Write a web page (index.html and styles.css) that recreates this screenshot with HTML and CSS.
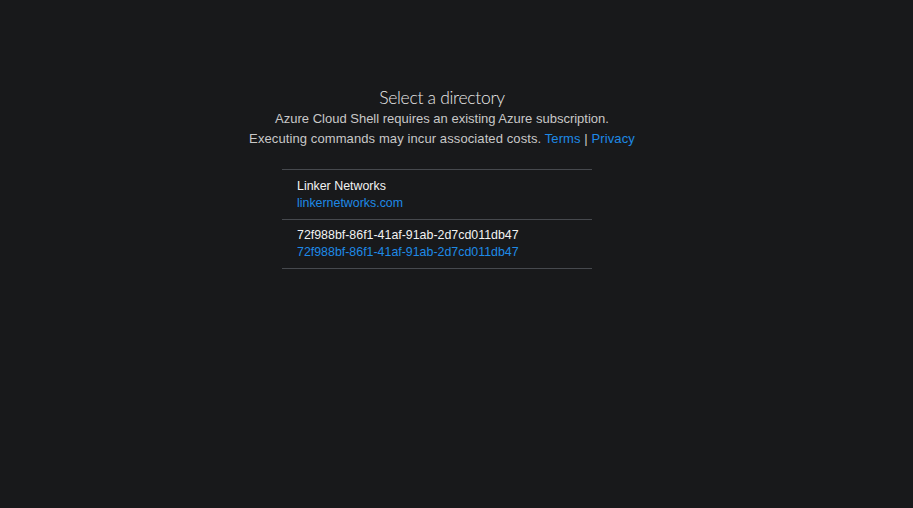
FILE: index.html
```html
<!DOCTYPE html>
<html>
<head>
<meta charset="utf-8">
<link rel="stylesheet" href="styles.css">
</head>
<body>
<main class="page">
  <h1 class="title">Select a directory</h1>
  <p class="desc">Azure Cloud Shell requires an existing Azure subscription.</p>
  <p class="desc">Executing commands may incur associated costs. <a class="link" href="#">Terms</a> | <a class="link" href="#">Privacy</a></p>
  <ul class="list">
    <li class="item">
      <div class="item-name">Linker Networks</div>
      <a class="link item-sub" href="#">linkernetworks.com</a>
    </li>
    <li class="item">
      <div class="item-name">72f988bf-86f1-41af-91ab-2d7cd011db47</div>
      <a class="link item-sub" href="#">72f988bf-86f1-41af-91ab-2d7cd011db47</a>
    </li>
  </ul>
</main>
</body>
</html>
```
FILE: styles.css
```css
html, body {
  margin: 0;
  height: 100%;
  background: #18191b;
}
body {
  font-family: "Liberation Sans", Arial, sans-serif;
  color: #cfcfcf;
}
.page {
  display: flex;
  flex-direction: column;
  align-items: center;
  padding-top: 86px;
  padding-right: 29px;
}
.title {
  margin: 0;
  font-family: Lato, "Liberation Sans", sans-serif;
  font-size: 17.5px;
  font-weight: 300;
  letter-spacing: -0.3px;
  line-height: 23px;
  color: #e8e8e8;
}
.desc {
  margin: 0;
  font-size: 13px;
  line-height: 20px;
  color: #c8c8c8;
}
.desc + .desc {
  letter-spacing: 0.1px;
}
.link {
  color: #1e8ae6;
  text-decoration: none;
}
.list {
  list-style: none;
  margin: 20px 10px 0 0;
  padding: 0;
  width: 310px;
  border-top: 1px solid #46494e;
}
.item {
  padding: 8px 15px 7px;
  border-bottom: 1px solid #46494e;
  display: flex;
  flex-direction: column;
  font-size: 12.4px;
  line-height: 17px;
}
.item + .item {
  padding-top: 7px;
  padding-bottom: 7px;
}
.item-name {
  color: #f2f2f2;
}
.item-sub {
  display: block;
}
```
